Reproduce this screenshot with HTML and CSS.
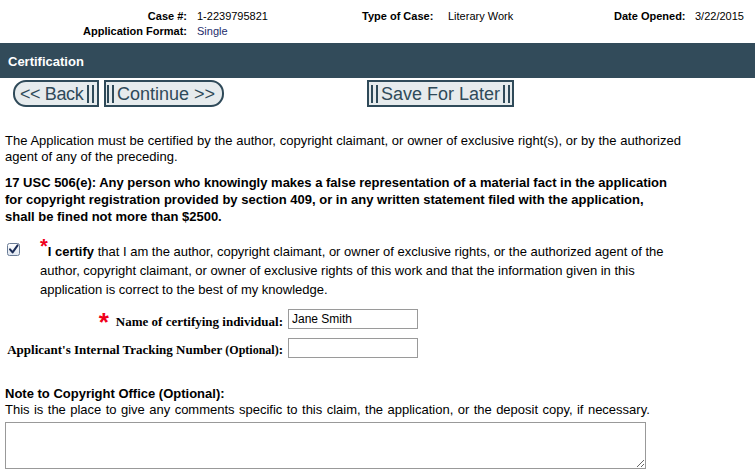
FILE: index.html
```html
<!DOCTYPE html>
<html>
<head>
<meta charset="utf-8">
<title>Certification</title>
<link rel="stylesheet" href="styles.css">
</head>
<body>
<div class="case-info">
  <div class="lbl lbl-r">Case #:</div>
  <div class="val val-pad">1-2239795821</div>
  <div class="lbl">Type of Case:</div>
  <div class="val">Literary Work</div>
  <div class="lbl">Date Opened:</div>
  <div class="val">3/22/2015</div>
  <div class="lbl lbl-r">Application Format:</div>
  <div class="val val-pad val-blue">Single</div>
</div>

<div class="section-bar">Certification</div>

<div class="btn-row">
  <button type="button" class="btn btn-back"><span class="btn-text">&lt;&lt; Back</span><span class="bars"></span></button>
  <button type="button" class="btn btn-continue"><span class="bars"></span><span class="btn-text">Continue &gt;&gt;</span></button>
  <button type="button" class="btn btn-save"><span class="bars"></span><span class="btn-text">Save For Later</span><span class="bars"></span></button>
</div>

<p class="intro">The Application must be certified by the author, copyright claimant, or owner of exclusive right(s), or by the authorized<br>agent of any of the preceding.</p>

<p class="legal">17 USC 506(e): Any person who knowingly makes a false representation of a material fact in the application<br>for copyright registration provided by section 409, or in any written statement filed with the application,<br>shall be fined not more than $2500.</p>

<div class="certify-row">
  <div class="check">
    <svg width="13" height="13" viewBox="0 0 13 13" aria-hidden="true">
      <defs>
        <linearGradient id="cbg" x1="0" y1="0" x2="0" y2="1">
          <stop offset="0" stop-color="#ffffff"/>
          <stop offset="1" stop-color="#dfe6f0"/>
        </linearGradient>
      </defs>
      <rect x="0.5" y="0.5" width="12" height="12" rx="2" fill="url(#cbg)" stroke="#6a7c96"/>
      <path d="M3 6.3 L5.6 9.4 L10.6 2.4" fill="none" stroke="#1c2d57" stroke-width="2" stroke-linecap="round" stroke-linejoin="round"/>
    </svg>
  </div>
  <div class="certify-text"><span class="req-small">*</span><b>I certify</b> that I am the author, copyright claimant, or owner of exclusive rights, or the authorized agent of the<br>author, copyright claimant, or owner of exclusive rights of this work and that the information given in this<br>application is correct to the best of my knowledge.</div>
</div>

<div class="fields">
  <label class="field-label" for="certname"><span class="req-big">*</span>Name of certifying individual:</label>
  <input class="field-input" id="certname" type="text" value="Jane Smith">
  <label class="field-label" for="tracking">Applicant's Internal Tracking Number <span class="opt">(Optional)</span>:</label>
  <input class="field-input" id="tracking" type="text" value="">
</div>

<div class="note">
  <div class="note-label">Note to Copyright Office (Optional):</div>
  <div class="note-desc">This is the place to give any comments specific to this claim, the application, or the deposit copy, if necessary.</div>
  <textarea class="note-box"></textarea>
</div>
</body>
</html>
```

FILE: styles.css
```css
body {
  margin: 0;
  font-family: "Liberation Sans", Arial, sans-serif;
  font-size: 13px;
  color: #000;
  background: #fff;
}

.case-info {
  display: grid;
  grid-template-columns: 187px 175px 86px 166px 81px 1fr;
  padding: 9px 0 4px;
  font-size: 11px;
  line-height: 15px;
}
.lbl { font-weight: bold; }
.lbl-r { text-align: right; }
.val-pad { padding-left: 10px; }
.val-blue { color: #1b2d6b; }

.section-bar {
  box-sizing: border-box;
  height: 35px;
  padding: 3px 0 0 8px;
  line-height: 32px;
  background: #324b5a;
  color: #fff;
  font-weight: bold;
  font-size: 13px;
}

.btn-row {
  display: flex;
  padding: 2px 0 0 13px;
}
.btn {
  display: flex;
  align-items: center;
  justify-content: space-between;
  box-sizing: border-box;
  height: 27px;
  margin: 0;
  border: 2px solid #2f4a59;
  background: #e6ebed;
  color: #2f4a59;
  font-family: "Liberation Sans", Arial, sans-serif;
  font-size: 18px;
  line-height: 1;
  white-space: nowrap;
  cursor: pointer;
}
.btn-text { flex: none; }
.btn-back {
  width: 86px;
  border-radius: 13px 0 0 13px;
  padding: 0 3px 0 5px;
}
.btn-back .btn-text { letter-spacing: -0.4px; }
.btn-continue {
  width: 120px;
  margin-left: 5px;
  border-radius: 0 13px 13px 0;
  padding: 0 7px 0 1px;
}
.btn-save {
  width: 147px;
  margin-left: 143px;
  padding: 0 2px;
}
.bars {
  flex: none;
  box-sizing: border-box;
  width: 7px;
  height: 18px;
  border-left: 2px solid #2f4a59;
  border-right: 2px solid #2f4a59;
}

.intro {
  margin: 26px 0 0;
  padding-left: 5px;
  line-height: 16px;
  word-spacing: 0.1px;
}
.legal {
  margin: 9px 0 0;
  padding-left: 5px;
  font-weight: bold;
  line-height: 17px;
}

.certify-row {
  display: flex;
  margin-top: 17px;
}
.check {
  width: 33px;
  padding: 1px 0 0 7px;
}
.check svg { display: block; }
.certify-text {
  line-height: 19px;
}
.req-small {
  color: #f0001a;
  font-size: 20px;
  font-weight: bold;
  line-height: 0;
  vertical-align: 3px;
}

.fields {
  display: grid;
  grid-template-columns: 283px 130px;
  column-gap: 5px;
  row-gap: 8px;
  margin-top: 10px;
  align-items: center;
}
.field-label {
  font-family: "Liberation Serif", "Times New Roman", serif;
  font-weight: bold;
  font-size: 13px;
  text-align: right;
  padding-top: 5px;
  line-height: 15px;
}
.opt { font-size: 12px; }
.req-big {
  color: #f0001a;
  font-family: "Liberation Sans", Arial, sans-serif;
  font-weight: bold;
  font-size: 26px;
  line-height: 0;
  vertical-align: -5px;
  margin-right: 7px;
}
.field-input {
  box-sizing: border-box;
  width: 130px;
  height: 20px;
  margin: 0;
  padding: 0 3px;
  border: 1px solid #9a9a9a;
  font-family: "Liberation Sans", Arial, sans-serif;
  font-size: 12px;
  color: #000;
}

.note {
  margin-top: 28px;
  padding-left: 5px;
  line-height: 16px;
}
.note-label { font-weight: bold; }
.note-desc { word-spacing: 0.8px; }
.note-box {
  display: block;
  box-sizing: border-box;
  width: 641px;
  height: 47px;
  margin-top: 4px;
  border: 1px solid #999;
  font-family: "Liberation Sans", Arial, sans-serif;
}
```
